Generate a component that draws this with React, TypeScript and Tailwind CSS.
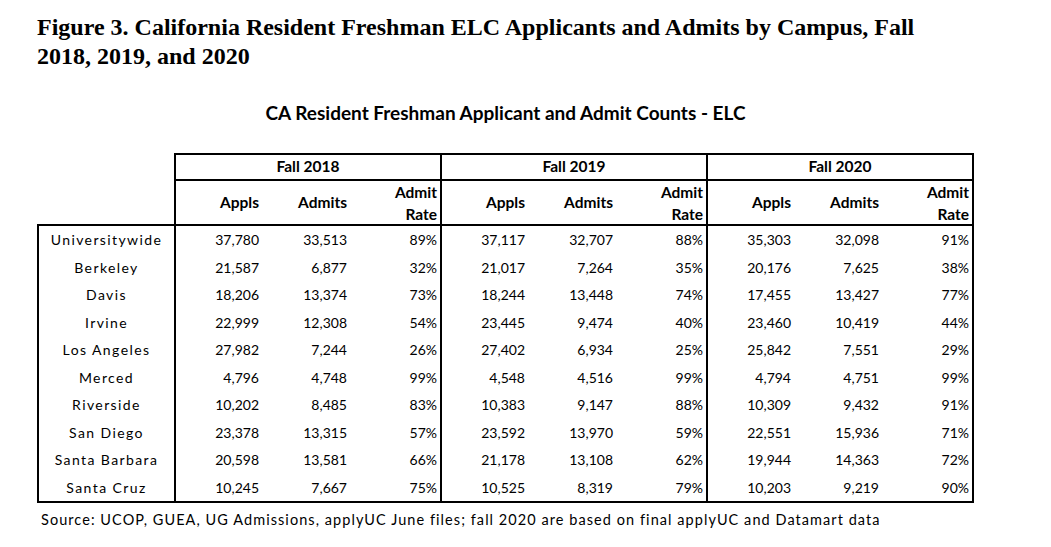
type Row = {
  campus: string;
  values: [string, string, string][];
};

const YEARS = ["Fall 2018", "Fall 2019", "Fall 2020"];

const ROWS: Row[] = [
  { campus: "Universitywide", values: [["37,780", "33,513", "89%"], ["37,117", "32,707", "88%"], ["35,303", "32,098", "91%"]] },
  { campus: "Berkeley", values: [["21,587", "6,877", "32%"], ["21,017", "7,264", "35%"], ["20,176", "7,625", "38%"]] },
  { campus: "Davis", values: [["18,206", "13,374", "73%"], ["18,244", "13,448", "74%"], ["17,455", "13,427", "77%"]] },
  { campus: "Irvine", values: [["22,999", "12,308", "54%"], ["23,445", "9,474", "40%"], ["23,460", "10,419", "44%"]] },
  { campus: "Los Angeles", values: [["27,982", "7,244", "26%"], ["27,402", "6,934", "25%"], ["25,842", "7,551", "29%"]] },
  { campus: "Merced", values: [["4,796", "4,748", "99%"], ["4,548", "4,516", "99%"], ["4,794", "4,751", "99%"]] },
  { campus: "Riverside", values: [["10,202", "8,485", "83%"], ["10,383", "9,147", "88%"], ["10,309", "9,432", "91%"]] },
  { campus: "San Diego", values: [["23,378", "13,315", "57%"], ["23,592", "13,970", "59%"], ["22,551", "15,936", "71%"]] },
  { campus: "Santa Barbara", values: [["20,598", "13,581", "66%"], ["21,178", "13,108", "62%"], ["19,944", "14,363", "72%"]] },
  { campus: "Santa Cruz", values: [["10,245", "7,667", "75%"], ["10,525", "8,319", "79%"], ["10,203", "9,219", "90%"]] },
];

// widths inside a year group: appls | admits | rate (264px of content)
const COLS = "grid grid-cols-[86px_88px_90px]";

function HeaderGroup({ year, first }: { year: string; first: boolean }) {
  return (
    <div className={`w-[266px] text-[15.5px] ${first ? "" : "border-l-2 border-black"}`}>
      <div className="flex h-[26px] items-center justify-center border-b-2 border-black font-bold">
        {year}
      </div>
      <div className={`${COLS} h-[43px] font-bold`}>
        <div className="flex items-center justify-end pr-[3px]">Appls</div>
        <div className="flex items-center justify-end pr-[3px]">Admits</div>
        <div className="flex flex-col items-end justify-center pr-[3px] leading-[22px]">
          <span>Admit</span>
          <span>Rate</span>
        </div>
      </div>
    </div>
  );
}

export default function App() {
  return (
    <div className="h-[547px] w-[1051px] bg-white text-black">
      <h1
        className="pl-[37px] pt-[13px] text-[24px] font-bold leading-[29px]"
        style={{ fontFamily: '"Liberation Serif", "Times New Roman", serif' }}
      >
        Figure 3. California Resident Freshman ELC Applicants and Admits by Campus, Fall
        <br />
        2018, 2019, and 2020
      </h1>

      <div
        className="ml-[37px] w-[937px] text-[14px]"
        style={{ fontFamily: 'Lato, "Open Sans", sans-serif' }}
      >
        <div className="mt-[32px] text-center text-[19px] font-bold leading-[20px]">
          CA Resident Freshman Applicant and Admit Counts - ELC
        </div>

        <div className="mt-[30px] ml-[137px] flex w-[800px] border-x-2 border-t-2 border-black">
          {YEARS.map((y, i) => (
            <HeaderGroup key={y} year={y} first={i === 0} />
          ))}
        </div>

        <div className="flex border-2 border-black">
          <div className="w-[135px]">
            {ROWS.map((r) => (
              <div
                key={r.campus}
                className="flex h-[27.5px] items-center justify-center tracking-[0.1em]"
              >
                {r.campus}
              </div>
            ))}
          </div>
          {YEARS.map((y, gi) => (
            <div key={y} className="w-[266px] border-l-2 border-black">
              {ROWS.map((r) => (
                <div key={r.campus} className={`${COLS} h-[27.5px] items-center`}>
                  {r.values[gi].map((v, ci) => (
                    <div key={ci} className="pr-[3px] text-right">
                      {v}
                    </div>
                  ))}
                </div>
              ))}
            </div>
          ))}
        </div>

        <div className="mt-[6px] pl-[4px] text-[14.5px] tracking-[0.073em]">
          Source: UCOP, GUEA, UG Admissions, applyUC June files; fall 2020 are based on final
          applyUC and Datamart data
        </div>
      </div>
    </div>
  );
}
